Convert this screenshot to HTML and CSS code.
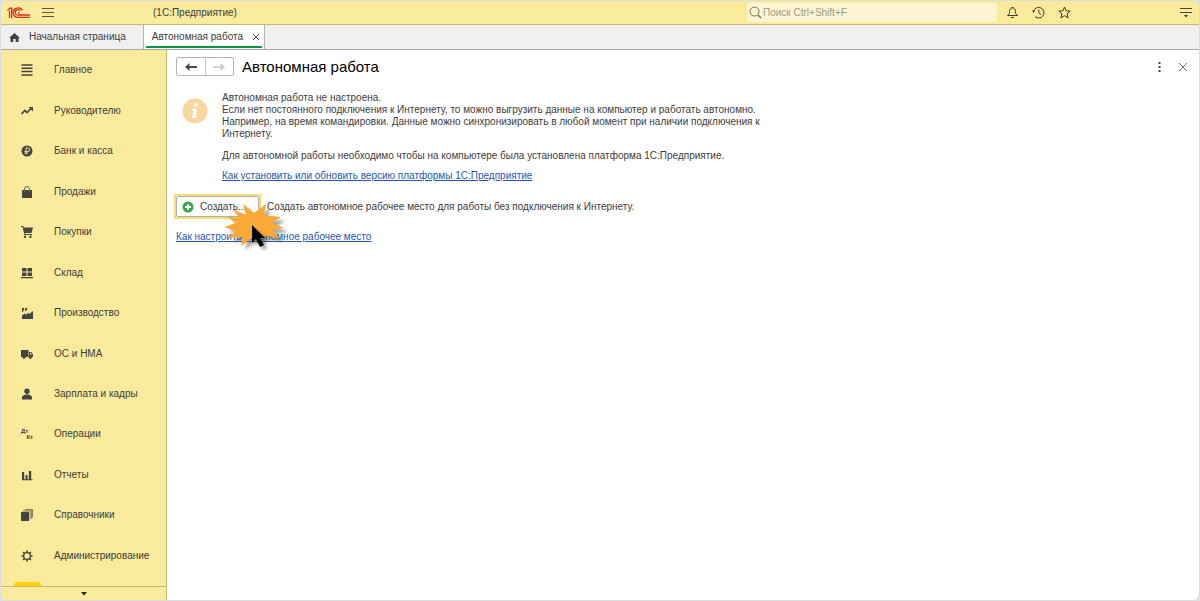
FILE: index.html
```html
<!DOCTYPE html>
<html lang="ru">
<head>
<meta charset="utf-8">
<title>Автономная работа</title>
<link rel="stylesheet" href="styles.css">
</head>
<body>
<div class="window">
  <header class="topbar">
    <svg class="logo" width="24" height="12" viewBox="0 0 24 12" fill="none" stroke="#dc2a20" stroke-width="1.3"><path d="M.5 3.500 3 1.200h1.700V11M2.500 4v7"/><path d="M15.300 3A5 4.700 0 1 0 11.500 10.300H23"/><path d="M13.400 4.300A2.700 2.700 0 1 0 11.500 8H23"/><path d="M11 6h1.500"/></svg>
    <button class="icon-btn menu" aria-label="Меню"><svg width="12" height="10" viewBox="0 0 12 10" stroke="#5b5640"><path d="M0 .5h12M0 4.500h12M0 8.500h12"/></svg></button>
    <span class="app-name">(1С:Предприятие)</span>
    <label class="search">
      <svg width="13" height="13" viewBox="0 0 13 13" fill="none" stroke="#77705a"><circle cx="5.500" cy="5.500" r="4.500"/><path d="m9 9 3 3" stroke-width="1.500"/></svg>
      <input type="text" placeholder="Поиск Ctrl+Shift+F" aria-label="Поиск">
    </label>
    <button class="icon-btn" aria-label="Уведомления"><svg width="13" height="13" viewBox="0 0 13 13" fill="none" stroke="#3f3c30"><path d="M1.500 9.500h10L9.500 7.500V5.500C9.500 3.500 8.500 2 6.500 2S3.500 3.500 3.500 5.500v2zM5.500 1.500h2M5 11.500h3"/></svg></button>
    <button class="icon-btn" aria-label="История"><svg width="13" height="13" viewBox="0 0 13 13" fill="none" stroke="#3f3c30"><path d="M1.500 5.500A5.300 5.300 0 1 1 3 10.500M6.800 3.500v3.300l2.200 2"/><path d="m0 4.500 3 0L1.500 7z" fill="#3f3c30" stroke="none"/></svg></button>
    <button class="icon-btn" aria-label="Избранное"><svg width="13" height="13" viewBox="0 0 13 13" fill="none" stroke="#3f3c30"><path d="m6.500 1 1.600 3.800 4.100.3L9.100 7.800l1 4.100-3.600-2.200-3.600 2.200 1-4.100L.8 5.100l4.100-.3z"/></svg></button>
    <button class="icon-btn options" aria-label="Настройки"><svg width="12" height="11" viewBox="0 0 12 11" stroke="#4a4636"><path d="M0 1.500h12M0 5.500h12"/><path d="M4 8h4l-2 2.500z" fill="#333" stroke="none"/></svg></button>
  </header>
  <nav class="tabs" aria-label="Открытые окна">
    <a class="tab" href="#home"><svg width="11" height="9" viewBox="0 0 11 9" fill="#404040"><path d="M5.500 0 11 5H9.500v4H6.700V6H4.300v3H1.500V5H0z"/></svg>Начальная страница</a>
    <div class="tab active"><a class="tab-name" href="#offline">Автономная работа</a><button class="icon-btn" aria-label="Закрыть вкладку"><svg width="6" height="6" viewBox="0 0 6 6" stroke="#555"><path d="m0 0 6 6M6 0 0 6"/></svg></button></div>
  </nav>
  <div class="body">
    <aside class="sidebar">
      <nav class="sections" aria-label="Разделы">
        <a href="#s1"><svg viewBox="0 0 12 12" stroke="#444"><path d="M.5 1h11M.5 4.300h11M.5 7.600h11M.5 11h11" stroke-width="1.500"/></svg>Главное</a>
        <a href="#s2"><svg viewBox="0 0 12 12" fill="none" stroke="#444" stroke-width="1.600"><path d="m.5 9 3.500-3.500 2 2L10.500 3"/><path d="M7.500 2H12v4.500z" fill="#444" stroke="none"/></svg>Руководителю</a>
        <a href="#s3"><svg viewBox="0 0 12 12" fill="none"><circle cx="6" cy="6" r="5.500" fill="#444"/><path d="M5 9.500V3h2a1.500 1.500 0 0 1 0 3.500H3.500M3.500 8H7" stroke="#f0e29a"/></svg>Банк и касса</a>
        <a href="#s4"><svg viewBox="0 0 12 12" fill="none"><path d="M1 4h10v8H1z" fill="#444"/><path d="M3.500 6V3a2.500 2.500 0 0 1 5 0v3" stroke="#6d684a"/></svg>Продажи</a>
        <a href="#s5"><svg viewBox="0 0 12 12" fill="#444"><path d="M0 0h2.300l.5 1.500H12L10.500 7H4l.4 1H11v1H3.500L1.600 1H0z"/><circle cx="4" cy="10.700" r="1.200"/><circle cx="9.500" cy="10.700" r="1.200"/></svg>Покупки</a>
        <a href="#s6"><svg viewBox="0 0 12 12" fill="#444"><path d="M1 1h4.500v3.500H1zM6.500 1H11v3.500H6.500zM1 5.500h4.500V9H1zM6.500 5.500H11V9H6.500zM0 10h12v1.300H0z"/></svg>Склад</a>
        <a href="#s7"><svg viewBox="0 0 12 12" fill="#444"><path d="M1 12V8.500L4.500 6v2L8 5.500v1.800L12 4v8zM1 1h2v1.500L1.800 5H1zM4 1h2.500L5 4H4z"/></svg>Производство</a>
        <a href="#s8"><svg viewBox="0 0 12 12" fill="#444"><path d="M0 2h7.500v7H0zM8 4h2.300L12 6.500V9H8z"/><circle cx="3" cy="9.300" r="1.500"/><circle cx="9.300" cy="9.300" r="1.500"/><path d="M9 5h1l1 1.500H9z" fill="#f9eb9b"/></svg>ОС и НМА</a>
        <a href="#s9"><svg viewBox="0 0 12 12" fill="#444"><circle cx="6" cy="3.200" r="2.700"/><path d="M1 11.500V9.300C1 7.500 3.500 7 4.500 6.500h3c1 .5 3.500 1 3.500 2.800v2.200z"/></svg>Зарплата и кадры</a>
        <a href="#s10"><span class="dtkt" aria-hidden="true"><b>Дт</b><b>Кт</b></span>Операции</a>
        <a href="#s11"><svg viewBox="0 0 12 12" fill="#444"><path d="M1 3h2.200v7.500H1zM4.500 6h2v4.500h-2zM7.800 2h2.400v8.500H7.800zM1 10.300h10.500v1H1z"/></svg>Отчеты</a>
        <a href="#s12"><svg viewBox="0 0 12 12" fill="none" stroke="#6d684a" stroke-width=".8"><path d="M0 3h8v9H0z" fill="#444" stroke="none"/><path d="M1.500 2H9v8.500M3.500.9H10.500V9.500M5 .4h6.500V8.500"/></svg>Справочники</a>
        <a href="#s13"><svg viewBox="0 0 12 12" fill="none" stroke="#444"><circle cx="6" cy="6" r="3.300" stroke-width="1.300"/><path d="M6 .5v2M6 9.500v2M.5 6h2M9.500 6h2M2.100 2.100l1.400 1.400M8.500 8.500l1.400 1.400M2.100 9.900l1.400-1.400M8.500 3.500l1.400-1.400" stroke-width="1.600"/></svg>Администрирование</a>
        <div class="next-section"></div>
      </nav>
      <button class="scroll-down" aria-label="Прокрутить вниз"><svg width="6" height="4" viewBox="0 0 6 4"><path d="M0 0h6L3 3.500z" fill="#222"/></svg></button>
    </aside>
    <main class="page">
      <div class="page-head">
        <div class="history">
          <button aria-label="Назад"><svg width="12" height="8" viewBox="0 0 12 8"><path d="M0 4l4.500-4v3H12v2H4.500v3z" fill="#4a4a4a"/></svg></button>
          <button aria-label="Вперед" disabled><svg width="12" height="8" viewBox="0 0 12 8"><path d="M12 4 7.500 0v3.200H0v1.500h7.500V8z" fill="#c8c8c8"/></svg></button>
        </div>
        <h1>Автономная работа</h1>
        <button class="icon-btn" aria-label="Еще"><svg width="3" height="10" viewBox="0 0 3 10" fill="#444"><path d="M.5 0h2v2h-2zM.5 4h2v2h-2zM.5 8h2v2h-2z"/></svg></button>
        <button class="icon-btn" aria-label="Закрыть"><svg width="8" height="8" viewBox="0 0 8 8" stroke="#666"><path d="m0 0 8 8M8 0 0 8"/></svg></button>
      </div>
      <section class="notice">
        <svg width="26" height="26" viewBox="0 0 26 26"><circle cx="13" cy="13" r="12.500" fill="#f9d5a0"/><circle cx="14" cy="7" r="2" fill="#fff"/><path d="M10 11h5l-1.500 7.500h1.500l-.5 1.500h-4.500l1.500-7.500H9.700z" fill="#fff"/></svg>
        <div class="notice-text">
          <p>Автономная работа не настроена.<br>Если нет постоянного подключения к Интернету, то можно выгрузить данные на компьютер и работать автономно.<br>Например, на время командировки. Данные можно синхронизировать в любой момент при наличии подключения к<br>Интернету.</p>
          <p>Для автономной работы необходимо чтобы на компьютере была установлена платформа 1С:Предприятие.</p>
          <a class="link" href="#install">Как установить или обновить версию платформы 1С:Предприятие</a>
        </div>
      </section>
      <div class="action">
        <div class="create-wrap">
          <button class="create" id="create" aria-describedby="create-hint"><svg width="12" height="12" viewBox="0 0 12 12"><circle cx="6" cy="6" r="5.500" fill="#36a84b"/><path d="M6 3v6M3 6h6" stroke="#fff" stroke-width="1.800"/></svg>Создать...</button>
          <svg class="click" width="70" height="64" viewBox="0 0 70 64">
            <defs>
              <filter id="soft" x="-20%" y="-20%" width="150%" height="150%"><feGaussianBlur stdDeviation="1.500"/></filter>
              <path id="burst" d="M10 19 24 25 21 14 32 23 44 14 42 25 59 27 50 33 62 38 50 40 58 48 43 46 38 50 30 48 19 56 21 47 6 48 14 41 2 37 14 33 5 27 18 28z"/>
            </defs>
            <use href="#burst" fill="#555" opacity=".5" transform="translate(4 4)" filter="url(#soft)"/>
            <use href="#burst" fill="#f9a935"/>
            <path d="M31 36v17l4-4 4 8 4-2-4-7h6z" fill="#444" opacity=".5" transform="translate(2 3)" filter="url(#soft)"/>
            <path d="M30 35v18l4-4 4 8 4-2-4-7h5z" fill="#000"/>
          </svg>
        </div>
        <span id="create-hint">Создать автономное рабочее место для работы без подключения к Интернету.</span>
      </div>
      <a class="link" href="#setup">Как настроить автономное рабочее место</a>
    </main>
  </div>
</div>
</body>
</html>
```
FILE: styles.css
```css
* { box-sizing: border-box; }

body {
  margin: 0;
  background: #dcdfe0;
  color: #3c3c3c;
  font: 10px/12px "Liberation Sans", Arial, sans-serif;
}

a { color: inherit; text-decoration: none; }
svg { display: block; flex: none; }

button {
  font: inherit;
  color: inherit;
  padding: 0;
  border: 0;
  background: none;
}

.window {
  display: flex;
  flex-direction: column;
  height: 100vh;
  border: 1px solid #dcdcdc;
  border-radius: 7px;
  overflow: hidden;
  background: #fff;
}

.topbar {
  display: flex;
  align-items: center;
  height: 24px;
  padding: 0 7px 0 6px;
  background: #f9eb9b;
  border-bottom: 1px solid #c5b97c;
}

.icon-btn {
  display: flex;
  align-items: center;
  justify-content: center;
}

.topbar .icon-btn { margin-left: 13px; }
.topbar .menu { margin-left: 11px; }
.topbar .options { margin-left: 109px; }
.app-name { margin-left: 99px; }

.search {
  display: flex;
  align-items: center;
  width: 250px;
  height: 19px;
  margin-left: auto;
  margin-right: -4px;
  padding-left: 2px;
  background: #fdf5d2;
  border-radius: 2px;
}

.search input {
  flex: 1;
  min-width: 0;
  padding: 0 1px;
  border: 0;
  outline: 0;
  background: none;
  font: inherit;
}

.search input::placeholder { color: #a19b83; opacity: 1; }

.tabs {
  display: flex;
  height: 25px;
  background: #f0f0f0;
  border-bottom: 1px solid #a9a9a9;
}

.tab {
  display: flex;
  align-items: center;
  gap: 9px;
  padding: 0 17px 0 8px;
  border-right: 1px solid #b4b4b4;
}

.tab.active {
  gap: 10px;
  padding: 0 5px 0 8px;
  background: linear-gradient(#009646, #009646) 50% 21px / calc(100% - 4px) 2px no-repeat #fff;
}

.body { display: flex; flex: 1; min-height: 0; }

.sidebar {
  display: flex;
  flex-direction: column;
  width: 166px;
  background: #f9eb9b;
  border-right: 1px solid #c5b97c;
}

.sections {
  display: flex;
  flex: 1;
  flex-direction: column;
  min-height: 0;
  overflow: hidden;
}

.sections a {
  display: flex;
  flex: 1;
  align-items: center;
  gap: 21px;
  padding-left: 20px;
}

.sections svg, .dtkt { width: 12px; height: 12px; }
.dtkt { display: flex; flex-direction: column; font-size: 6px; line-height: 6px; }
.dtkt b:last-child { align-self: flex-end; }

.next-section {
  height: 4px;
  width: 27px;
  margin: 6px 0 0 13px;
  border-radius: 4px 4px 0 0;
  background: #ffd200;
}

.scroll-down {
  display: flex;
  align-items: center;
  justify-content: center;
  height: 14px;
  border-top: 1px solid #c5b97c;
}

.page { flex: 1; min-width: 0; padding: 7px 12px 0 9px; }

.page-head { display: flex; align-items: center; }

.page-head h1 {
  flex: 1;
  margin: 0 0 0 8px;
  color: #000;
  font-size: 15px;
  font-weight: 400;
  line-height: 17px;
}

.page-head .icon-btn { margin-left: 18px; }

.history {
  display: flex;
  width: 58px;
  height: 19px;
  border: 1px solid #b5b5b5;
  border-radius: 2px;
}

.history button {
  display: flex;
  flex: 1;
  align-items: center;
  justify-content: center;
}

.history button + button { border-left: 1px solid #c6c6c6; }

.notice { display: flex; gap: 14px; margin-top: 16px; padding-left: 6px; }
.notice > svg { margin-top: 6px; }
.notice p { margin: 0 0 10px; }
.notice p + p { margin-bottom: 8px; }

.link { color: #2457b3; text-decoration: underline; }

.action { display: flex; align-items: center; gap: 6px; margin: 12px 0 12px -2px; }

.create-wrap {
  position: relative;
  border: 2px solid #fbdc73;
}

.create {
  display: flex;
  align-items: center;
  gap: 6px;
  width: 83px;
  height: 21px;
  padding-left: 5px;
  border: 1px solid #b0b0b0;
  border-radius: 2px;
  background: #fff;
}

.click { position: absolute; left: 46px; top: -6px; pointer-events: none; }
```
